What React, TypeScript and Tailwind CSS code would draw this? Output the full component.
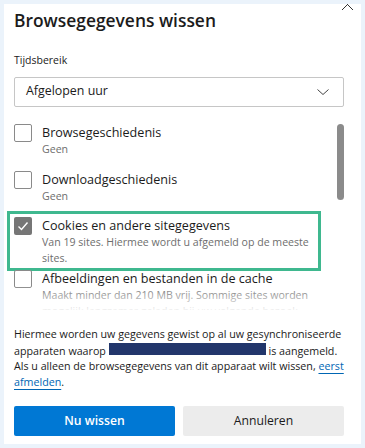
import React from "react";

interface Item {
  title: string;
  desc: string;
  checked: boolean;
  height: string;
}

const items: Item[] = [
  { title: "Browsegeschiedenis", desc: "Geen", checked: false, height: "h-[47px]" },
  { title: "Downloadgeschiedenis", desc: "Geen", checked: false, height: "h-[46px]" },
  {
    title: "Cookies en andere sitegegevens",
    desc: "Van 19 sites. Hiermee wordt u afgemeld op de meeste sites.",
    checked: true,
    height: "h-[53px]",
  },
  {
    title: "Afbeeldingen en bestanden in de cache",
    desc: "Maakt minder dan 210 MB vrij. Sommige sites worden mogelijk langzamer geladen bij uw volgende bezoek.",
    checked: false,
    height: "h-[60px]",
  },
];

const Checkbox: React.FC<{ checked: boolean }> = ({ checked }) =>
  checked ? (
    <div className="flex h-[18px] w-[18px] shrink-0 items-center justify-center rounded-[2px] bg-[#767676]">
      <svg width="12" height="12" viewBox="0 0 12 12" fill="none">
        <path d="M1.5 6.5 L4.5 9.5 L10.5 2.5" stroke="white" strokeWidth="1.4" />
      </svg>
    </div>
  ) : (
    <div className="h-[18px] w-[18px] shrink-0 rounded-[2px] border border-[#8a8a8a] bg-white" />
  );

const App: React.FC = () => {
  return (
    <div className="h-[448px] w-[365px] bg-[#ebf3fb] pl-[4px] pt-[4px] font-['Open_Sans',sans-serif] text-[#1b1b1b]">
      <div className="relative h-[440px] w-[357px] overflow-hidden bg-white px-[10px]">
        {/* close button, scrolled partly out of view */}
        <svg
          className="absolute right-[7px] top-[-6px]"
          width="13"
          height="13"
          viewBox="0 0 13 13"
          fill="none"
        >
          <path d="M1 1 L12 12 M12 1 L1 12" stroke="#333" strokeWidth="1" />
        </svg>

        <h1 className="pt-[4px] text-[17.4px] font-semibold leading-[24px]">Browsegegevens wissen</h1>

        <div className="mt-[21px] text-[10.5px] leading-[14px]">Tijdsbereik</div>

        <div className="mt-[10px] flex h-[30px] w-[330px] items-center justify-between rounded-[2px] border border-[#c6c6c6] pl-[11px] pr-[14px]">
          <span className="pb-[1px] text-[12.4px]">Afgelopen uur</span>
          <svg width="12" height="6" viewBox="0 0 12 6" fill="none">
            <path d="M0.5 0.5 L6 5.5 L11.5 0.5" stroke="#444" strokeWidth="1" />
          </svg>
        </div>

        <div className="relative -mx-[10px] h-[203px] overflow-hidden px-[10px] pt-[17px]">
          {items.map((item) => (
            <div key={item.title} className={`relative flex gap-[10px] ${item.height}`}>
              {item.checked && (
                <div className="absolute left-[-7px] top-[-6px] h-[60px] w-[314px] border-[3px] border-[#3fb88f]" />
              )}
              <Checkbox checked={item.checked} />
              <div className="w-[280px]">
                <div className="text-[12.6px] leading-[17px]">{item.title}</div>
                <div className="text-[10.6px] leading-[16px] text-[#6e6e6e]">{item.desc}</div>
              </div>
            </div>
          ))}
          <div className="absolute right-[17px] top-[17px] h-[76px] w-[7px] rounded-full bg-[#8b8b8b]" />
          <div className="absolute bottom-0 left-0 h-[24px] w-full bg-gradient-to-b from-white/0 to-white/90" />
        </div>

        <p className="mt-[17px] text-[10.7px] leading-[15.5px]">
          Hiermee worden uw gegevens gewist op al uw gesynchroniseerde apparaten waarop{" "}
          <span className="inline-block h-[12px] w-[157px] bg-[#22366b]" /> is aangemeld. Als u alleen
          de browsegegevens van dit apparaat wilt wissen,{" "}
          <a className="text-[#0066b4] underline underline-offset-[3px]">eerst afmelden</a>.
        </p>

        <div className="mt-[16px] flex gap-[8px]">
          <button className="h-[30px] w-[161px] rounded-[2px] bg-[#0078d4] text-[12.2px] font-semibold text-white">
            Nu wissen
          </button>
          <button className="h-[30px] w-[161px] rounded-[2px] bg-[#ececec] text-[12.2px] text-[#1b1b1b]">
            Annuleren
          </button>
        </div>
      </div>
    </div>
  );
};

export default App;
